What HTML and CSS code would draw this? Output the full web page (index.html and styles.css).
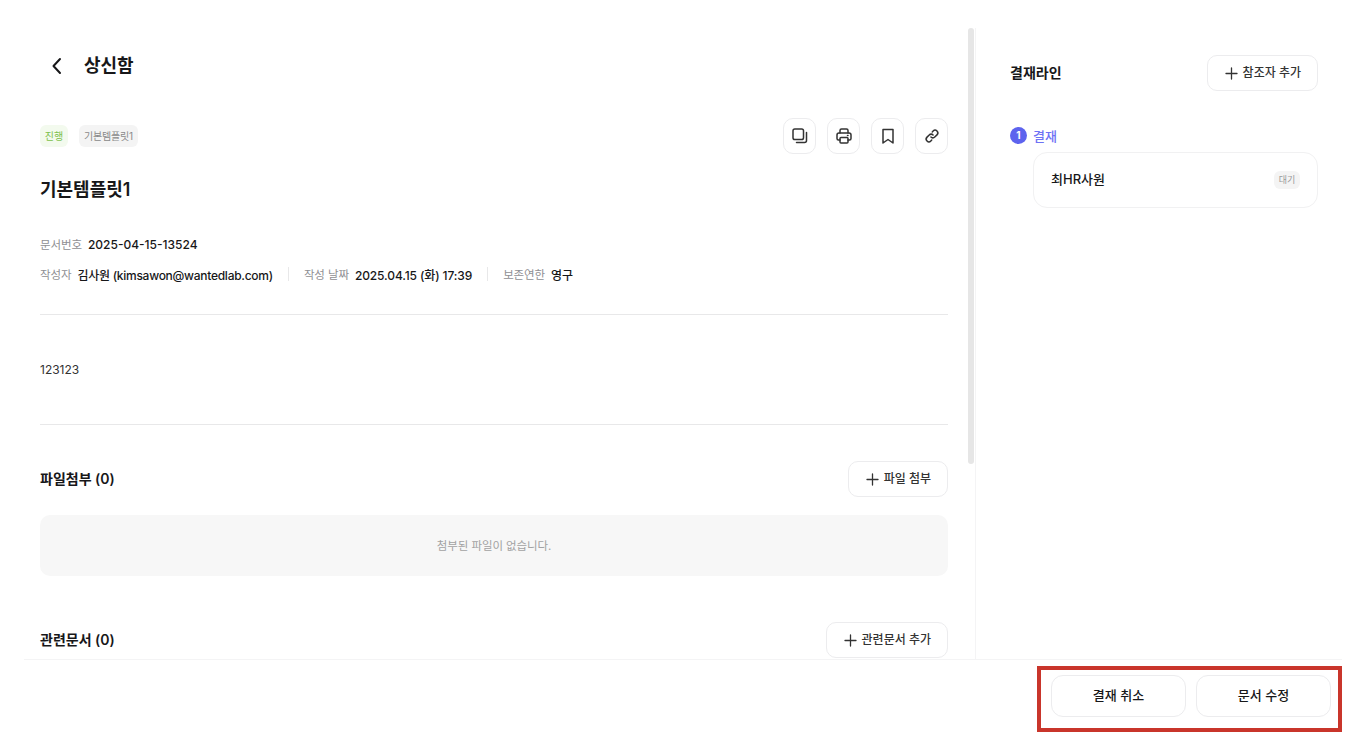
FILE: index.html
```html
<!DOCTYPE html>
<html lang="ko">
<head>
<meta charset="utf-8">
<title>상신함</title>
<link rel="stylesheet" href="styles.css">
</head>
<body>
<div class="app">
  <div class="main">
    <section class="doc">
      <header class="page-head">
        <svg class="back" width="20" height="20" viewBox="0 0 20 20"><path d="M13 3 6.5 10 13 17" fill="none" stroke="#171719" stroke-width="2" stroke-linecap="round" stroke-linejoin="round"/></svg>
        <h1 class="page-title">상신함</h1>
      </header>
      <div class="tool-row">
        <div class="tags">
          <span class="tag tag-green">진행</span>
          <span class="tag tag-gray">기본템플릿1</span>
        </div>
        <div class="tools">
          <button class="icon-btn"><svg width="18" height="18" viewBox="0 0 18 18" fill="none" stroke="#333" stroke-width="1.5" stroke-linecap="round" stroke-linejoin="round"><rect x="2" y="2" width="10.5" height="10.5" rx="1.8"/><path d="M15.5 5.5v8a2 2 0 0 1-2 2h-8"/></svg></button>
          <button class="icon-btn"><svg width="18" height="18" viewBox="0 0 18 18" fill="none" stroke="#333" stroke-width="1.5" stroke-linecap="round" stroke-linejoin="round"><path d="M5 6V3.5A1.5 1.5 0 0 1 6.500 2h5A1.500 1.500 0 0 1 13 3.500V6"/><path d="M5 13H3.500A1.500 1.500 0 0 1 2 11.500V8a2 2 0 0 1 2-2h10a2 2 0 0 1 2 2v3.500a1.500 1.500 0 0 1-1.500 1.500H13"/><rect x="5" y="10.500" width="8" height="5.500" rx="1"/><path d="M12.500 8.500h.5"/></svg></button>
          <button class="icon-btn"><svg width="18" height="18" viewBox="0 0 18 18" fill="none" stroke="#333" stroke-width="1.5" stroke-linejoin="round"><path d="M4 2.500h10v13.500l-5-3.500-5 3.500z"/></svg></button>
          <button class="icon-btn"><svg width="16" height="16" viewBox="0 0 18 18" fill="none" stroke="#333" stroke-width="1.700" stroke-linecap="round"><path d="M7.800 10.200a3 3 0 0 0 4.300 0l2.500-2.500a3 3 0 0 0-4.300-4.300l-1 1"/><path d="M10.200 7.800a3 3 0 0 0-4.300 0l-2.500 2.500a3 3 0 0 0 4.300 4.300l1-1"/></svg></button>
        </div>
      </div>
      <h2 class="doc-title">기본템플릿1</h2>
      <div class="meta">
        <div class="meta-line">
          <span class="meta-item"><span class="meta-key">문서번호</span><span class="meta-val">2025-04-15-13524</span></span>
        </div>
        <div class="meta-line">
          <span class="meta-item"><span class="meta-key">작성자</span><span class="meta-val meta-email">김사원 (kimsawon@wantedlab.com)</span></span>
          <span class="meta-sep"></span>
          <span class="meta-item"><span class="meta-key">작성 날짜</span><span class="meta-val meta-date">2025.04.15 (화) 17:39</span></span>
          <span class="meta-sep"></span>
          <span class="meta-item"><span class="meta-key">보존연한</span><span class="meta-val">영구</span></span>
        </div>
      </div>
      <div class="body-text">123123</div>
      <div class="section-head files-head">
        <h3 class="section-title">파일첨부 (0)</h3>
        <button class="btn"><svg class="plus" width="13" height="13" viewBox="0 0 13 13"><path d="M6.500 1v11M1 6.500h11" stroke="#333" stroke-width="1.300" stroke-linecap="round"/></svg>파일 첨부</button>
      </div>
      <div class="empty">첨부된 파일이 없습니다.</div>
      <div class="section-head related-head">
        <h3 class="section-title">관련문서 (0)</h3>
        <button class="btn"><svg class="plus" width="13" height="13" viewBox="0 0 13 13"><path d="M6.500 1v11M1 6.500h11" stroke="#333" stroke-width="1.300" stroke-linecap="round"/></svg>관련문서 추가</button>
      </div>
      <div class="scroll-thumb"></div>
    </section>
    <aside class="side">
      <div class="side-head">
        <h3 class="section-title">결재라인</h3>
        <button class="btn"><svg class="plus" width="13" height="13" viewBox="0 0 13 13"><path d="M6.500 1v11M1 6.500h11" stroke="#333" stroke-width="1.300" stroke-linecap="round"/></svg>참조자 추가</button>
      </div>
      <div class="step">
        <span class="step-num">1</span>
        <span class="step-name">결재</span>
      </div>
      <div class="person">
        <span class="person-name">최HR사원</span>
        <span class="tag tag-wait">대기</span>
      </div>
    </aside>
  </div>
  <footer class="foot">
    <button class="foot-btn">결재 취소</button>
    <button class="foot-btn">문서 수정</button>
    <div class="highlight"></div>
  </footer>
</div>
</body>
</html>
```
FILE: styles.css
```css
* { box-sizing: border-box; }
html, body { margin: 0; padding: 0; height: 100%; background: #fff; overflow: hidden; }
body { font-family: Inter, "Noto Sans CJK KR", "Noto Sans", sans-serif; color: #171719; }
button { font-family: inherit; background: #fff; cursor: pointer; padding: 0; }
h1, h2, h3 { margin: 0; }

.app { width: 1366px; height: 746px; padding-left: 24px; display: flex; flex-direction: column; }
.main { height: 660px; padding-top: 28px; display: flex; flex: none; border-bottom: 1px solid #f4f4f5; margin-right: 24px; }

.doc { position: relative; width: 952px; flex: none; height: 631px; overflow: hidden; padding: 0 27px 0 16px; border-right: 1px solid #f4f4f5; }
.scroll-thumb { position: absolute; left: 944px; top: 0; width: 6px; height: 436px; border-radius: 3px; background: #e6e6e6; }

.page-head { display: flex; align-items: center; height: 40px; margin-top: 18px; padding-left: 7px; }
.back { margin-right: 17px; }
.page-title { font-size: 18px; line-height: 28px; font-weight: 600; }

.tool-row { display: flex; justify-content: space-between; align-items: center; height: 36px; margin-top: 32px; }
.tags { display: flex; gap: 11px; align-items: center; }
.tag { display: inline-flex; align-items: center; justify-content: center; border-radius: 6px; font-size: 10px; line-height: 14px; }
.tag-green { width: 28px; height: 22px; background: #f3faee; color: #7cc04b; }
.tag-gray { width: 59px; height: 22px; background: #f4f4f4; color: #8a8a8a; letter-spacing: -0.2px; }
.tag-wait { width: 26px; height: 18px; background: #f4f4f4; color: #9a9a9a; font-size: 9px; }
.tools { display: flex; gap: 11px; }
.icon-btn { width: 33px; height: 36px; border: 1px solid #ececee; border-radius: 10px; display: flex; align-items: center; justify-content: center; }

.doc-title { font-size: 18px; line-height: 28px; font-weight: 600; margin-top: 22px; }

.meta { margin-top: 30px; padding-bottom: 30px; border-bottom: 1px solid #e8e8e9; display: flex; flex-direction: column; gap: 10px; }
.meta-line { display: flex; align-items: center; height: 20px; font-size: 12px; }
.meta-item { display: inline-flex; gap: 6px; align-items: center; }
.meta-key { color: #8f8f93; font-size: 11.500px; letter-spacing: -0.1px; }
.meta-val { color: #171719; font-weight: 500; }
.meta-email { letter-spacing: -0.27px; }
.meta-date { letter-spacing: -0.12px; }
.meta-sep { width: 1px; height: 14px; background: #e8e8e9; margin: 0 15px; }

.body-text { height: 110px; border-bottom: 1px solid #e8e8e9; display: flex; align-items: center; font-size: 12px; color: #333; padding-bottom: 1px; }

.section-head { display: flex; align-items: center; justify-content: space-between; }
.files-head { margin-top: 36px; }
.related-head { margin-top: 46px; }
.section-title { font-size: 14px; line-height: 22px; font-weight: 600; }
.btn { height: 36px; padding: 0 16px 3px 17px; border: 1px solid #ececee; border-radius: 10px; display: inline-flex; align-items: center; gap: 5px; font-size: 12px; font-weight: 500; color: #333; }
.plus { margin-top: 3px; }

.empty { height: 61px; margin-top: 18px; padding-bottom: 2px; border-radius: 10px; background: #f7f7f7; color: #a2a2a2; font-size: 11.500px; letter-spacing: -0.1px; display: flex; align-items: center; justify-content: center; }

.side { flex: 1; padding: 27px 24px 0 34px; }
.side-head { display: flex; align-items: center; justify-content: space-between; height: 36px; }
.step { display: flex; align-items: center; gap: 6px; height: 18px; margin-top: 35px; }
.step-num { width: 17px; height: 17px; border-radius: 50%; background: #5d63ee; color: #fff; font-size: 10px; font-weight: 700; display: flex; align-items: center; justify-content: center; }
.step-name { color: #6e72f5; font-size: 13px; font-weight: 500; }
.person { margin: 8px 0 0 23px; height: 56px; border: 1px solid #f1f1f2; border-radius: 14px; padding: 0 17px; display: flex; align-items: center; justify-content: space-between; }
.person-name { font-size: 13px; font-weight: 500; line-height: 16px; margin-top: -2px; }

.foot { position: relative; display: flex; justify-content: flex-end; align-items: flex-start; gap: 10px; padding: 15px 11px 0 0; margin-right: 24px; }
.foot-btn { width: 135px; height: 42px; border: 1px solid #ececee; border-radius: 12px; padding-bottom: 3px; font-size: 13px; font-weight: 500; color: #171719; }
.highlight { position: absolute; left: 1013px; top: 6px; width: 305px; height: 66px; border: 4px solid #c9352b; pointer-events: none; }
```
